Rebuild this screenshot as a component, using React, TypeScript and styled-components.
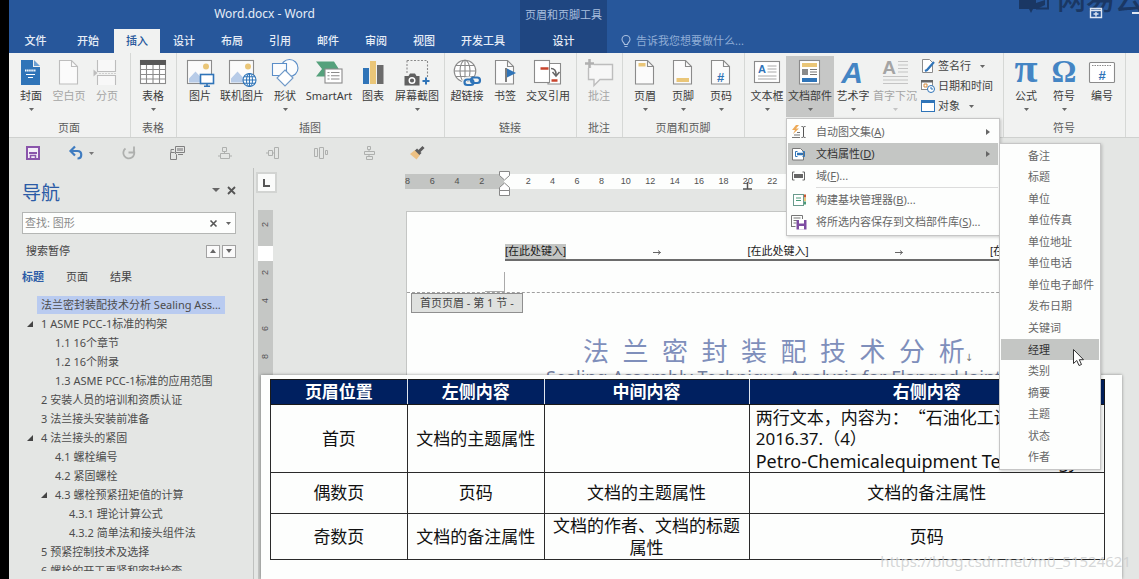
import React from 'react';
import styled, { createGlobalStyle } from 'styled-components';

const UI = '"Noto Sans", "Noto Sans CJK SC", sans-serif';
const CJK = '"Noto Sans CJK SC", sans-serif';
const BLUE = '#2f74b8';
const GRAY = '#8b8b8b';
const PALE = '#bdbdbd';
const SAND = '#eac678';

const Global = createGlobalStyle`
  *, *::before, *::after { box-sizing: border-box; }
  body { margin: 0; background: #e4e6e4; }
  button { font: inherit; color: inherit; background: none; border: 0; padding: 0; margin: 0; cursor: default; white-space: nowrap; }
  svg { display: block; flex: none; overflow: visible; }
`;

const Window = styled.div`
  position: relative;
  display: flex;
  flex-direction: column;
  height: 100vh;
  overflow: hidden;
  border-left: 9px solid #000;
  background: #e4e6e4;
  color: #444;
  font-family: ${UI};
  font-size: 11px;
  line-height: 16px;
`;

/* ---------- title bar and tabs ---------- */
const Header = styled.header`
  position: relative;
  flex: none;
  display: flex;
  height: 53px;
  background: #27579b;
  color: #e6edf7;
  overflow: hidden;
`;
const MainTabs = styled.div`
  flex: none;
  width: 511px;
`;
const DocTitle = styled.div`
  height: 29px;
  font-size: 12px;
  line-height: 28px;
  text-align: center;
`;
const TabRow = styled.nav`
  display: flex;
  height: 24px;
`;
const Tab = styled.button<{ $w: number; $on?: boolean }>`
  flex: none;
  width: ${p => p.$w}px;
  height: 24px;
  line-height: 22px;
  font-weight: 500;
  ${p => p.$on && 'background: #f1f2f1; color: #27579b;'}
`;
const Contextual = styled.div`
  flex: none;
  width: 87px;
  background: #1f4681;
  text-align: center;
`;
const ContextTitle = styled.div`
  height: 29px;
  line-height: 29px;
  color: #a9bfdf;
`;
const TellMe = styled.button`
  display: flex;
  align-items: center;
  align-self: flex-end;
  gap: 5px;
  height: 24px;
  margin-left: 14px;
  color: #8fadd6;
`;
const Brand = styled.div`
  position: absolute;
  right: -5px;
  top: -19px;
  display: flex;
  gap: 7px;
  align-items: center;
  color: #1a3764;
  font: 500 29px/32px ${CJK};
`;
const WindowButtons = styled.div`
  position: absolute;
  right: 0;
  top: 8px;
  display: flex;
  align-items: center;
  gap: 30px;
`;

/* ---------- ribbon ---------- */
const Ribbon = styled.div`
  flex: none;
  display: flex;
  height: 85px;
  background: #f1f2f1;
  border-bottom: 1px solid #cfd1cf;
`;
const Group = styled.section`
  flex: none;
  display: flex;
  flex-direction: column;
  padding: 3px 4px 0 3px;
  border-right: 1px solid #d6d8d6;
`;
const Tools = styled.div`
  display: flex;
  height: 64px;
`;
const Caption = styled.div`
  text-align: center;
  color: #5c5c5c;
  line-height: 16px;
`;
const ToolWrap = styled.div`
  position: relative;
`;
const ToolButton = styled.button<{ $w: number; $off?: boolean; $on?: boolean }>`
  display: flex;
  flex-direction: column;
  align-items: center;
  width: ${p => p.$w}px;
  height: 61px;
  padding-top: 3px;
  color: ${p => (p.$off ? '#a5a5a5' : '#3c3c3c')};
  background: ${p => (p.$on ? '#c6c7c6' : 'none')};
`;
const ToolLabel = styled.span`
  margin: 1px 0 4px;
  line-height: 16px;
`;
const SmallTools = styled.div`
  display: flex;
  flex-direction: column;
  width: 81px;
  padding-left: 3px;
`;
const SmallTool = styled.button`
  display: flex;
  align-items: center;
  gap: 3px;
  height: 20px;
  & > svg:last-child:not(:first-child) { margin-left: 6px; }
`;

/* ---------- menus ---------- */
const Menu = styled.div`
  position: absolute;
  z-index: 10;
  top: 62px;
  left: 0;
  width: 214px;
  padding: 2px 1px;
  background: #fdfefd;
  border: 1px solid #c6c6c6;
  box-shadow: 1px 1px 3px rgba(0, 0, 0, 0.2);
`;
const MenuRow = styled.div`
  position: relative;
`;
const MenuItem = styled.button<{ $on?: boolean }>`
  display: flex;
  align-items: center;
  gap: 9px;
  width: 100%;
  height: 22px;
  padding: 0 8px 0 3px;
  color: ${p => (p.$on ? '#333' : '#666')};
  background: ${p => (p.$on ? '#c4c6c4' : 'none')};
`;
const MenuText = styled.span`
  flex: 1;
  text-align: left;
`;
const MenuRule = styled.hr`
  margin: 0 0 1px 28px;
  border: 0;
  border-top: 1px solid #dcdcdc;
`;
const SubMenu = styled.div`
  position: absolute;
  top: 0;
  left: 100%;
  display: flex;
  flex-direction: column;
  width: 102px;
  height: 327px;
  margin-left: 1px;
  padding: 1px;
  background: #fdfefd;
  border: 1px solid #c6c6c6;
  box-shadow: 1px 1px 3px rgba(0, 0, 0, 0.2);
`;
const SubItem = styled.button<{ $on?: boolean }>`
  position: relative;
  flex: 1;
  padding-left: 27px;
  text-align: left;
  line-height: 16px;
  color: ${p => (p.$on ? '#333' : '#666')};
  background: ${p => (p.$on ? '#c4c6c4' : 'none')};
`;
const Pointer = styled.svg`
  position: absolute;
  right: 15px;
  top: 10px;
`;

/* ---------- quick access bar ---------- */
const QuickBar = styled.div`
  flex: none;
  display: flex;
  align-items: center;
  height: 30px;
`;
const QuickButton = styled.button`
  display: flex;
  align-items: center;
  justify-content: center;
  gap: 6px;
  width: 48px;
  height: 30px;
`;

/* ---------- navigation pane ---------- */
const Body = styled.div`
  flex: 1;
  display: flex;
  min-height: 0;
`;
const NavPane = styled.aside`
  flex: none;
  display: flex;
  flex-direction: column;
  width: 245px;
  padding: 10px 17px 8px 13px;
  border-right: 1px solid #bfc1bf;
`;
const NavHead = styled.div`
  display: flex;
  justify-content: space-between;
  height: 30px;
  margin-bottom: 4px;
`;
const NavTitle = styled.h2`
  margin: 0;
  color: #2b5ba6;
  font-size: 19px;
  font-weight: 400;
  line-height: 30px;
`;
const Pair = styled.div<{ $gap: number }>`
  display: flex;
  align-items: center;
  gap: ${p => p.$gap}px;
  height: 24px;
`;
const SearchBox = styled.div`
  display: flex;
  align-items: center;
  gap: 9px;
  height: 22px;
  padding: 0 4px 0 2px;
  background: #fdfefd;
  border: 1px solid #b4b6b4;
`;
const SearchInput = styled.input`
  flex: 1;
  min-width: 0;
  padding: 0;
  border: 0;
  outline: 0;
  background: none;
  font: 11px/16px ${UI};
  &::placeholder { color: #8a8a8a; opacity: 1; }
`;
const StatusRow = styled.div`
  display: flex;
  align-items: center;
  justify-content: space-between;
  height: 18px;
  margin-top: 8px;
  padding-left: 4px;
`;
const StepButton = styled.button`
  display: grid;
  place-items: center;
  width: 14px;
  height: 13px;
  background: #fafafa;
  border: 1px solid #a2a2a2;
`;
const NavTabs = styled.div`
  display: flex;
  gap: 22px;
  height: 18px;
  margin: 8px 0 9px;
`;
const NavTab = styled.button<{ $on?: boolean }>`
  font-weight: ${p => (p.$on ? 700 : 400)};
  color: ${p => (p.$on ? '#2b5ba6' : '#444')};
`;
const Outline = styled.ul`
  flex: 1;
  min-height: 0;
  margin: 0;
  padding: 0;
  overflow: hidden;
  list-style: none;
`;
const OutlineRow = styled.li<{ $level: number }>`
  display: flex;
  align-items: center;
  height: 19px;
  padding-left: ${p => 5 + p.$level * 14}px;
`;
const Twist = styled.span`
  width: 10px;
`;
const OutlineLink = styled.a<{ $on?: boolean }>`
  padding: 0 4px;
  line-height: 18px;
  color: #4c4c4c;
  text-decoration: none;
  white-space: nowrap;
  background: ${p => (p.$on ? '#b9cbf0' : 'none')};
`;

/* ---------- document ---------- */
const Workspace = styled.main`
  flex: 1;
  display: flex;
  min-width: 0;
`;
const SideColumn = styled.div`
  flex: none;
  display: flex;
  flex-direction: column;
  width: 24px;
  padding: 4px 1px 0 2px;
`;
const TabStop = styled.button`
  display: grid;
  place-items: center;
  height: 21px;
  background: #fafbfa;
  border: 2px solid #d2d4d2;
`;
const VRuler = styled.div`
  flex: 1;
  display: flex;
  flex-direction: column;
  width: 15px;
  margin: 17px 0 0 2px;
  background: #c5c7c5;
  color: #555;
  font: 9px/15px "Liberation Sans", sans-serif;
`;
const VGap = styled.div`
  height: 15px;
  margin: 8px 0 -3px;
  background: #fff;
`;
const VMark = styled.div<{ $h?: number }>`
  height: ${p => p.$h ?? 28}px;
  writing-mode: vertical-rl;
  transform: rotate(180deg);
  text-align: center;
`;
const Canvas = styled.div`
  flex: 1;
  display: flex;
  flex-direction: column;
  min-width: 0;
`;
const HRuler = styled.div`
  position: relative;
  flex: none;
  display: flex;
  height: 15px;
  margin: 6px 86px 0 127px;
  color: #505050;
  font: 9px/15px "Liberation Sans", sans-serif;
`;
const RulerMargin = styled.div`
  flex: none;
  display: flex;
  width: 99px;
  background: #c3c5c3;
`;
const RulerText = styled.div`
  flex: 1;
  display: flex;
  padding-left: 12px;
  background: #fdfefd;
`;
const Mark = styled.span<{ $center?: boolean }>`
  flex: 1 1 0;
  width: 0;
  text-align: ${p => (p.$center ? 'center' : 'left')};
`;
const Indent = styled.svg`
  position: absolute;
  left: 94px;
  top: -3px;
`;
const TabMark = styled.svg`
  position: absolute;
  left: 338px;
  top: 8px;
`;
const Page = styled.article`
  flex: 1;
  min-height: 0;
  margin: 22px 39px 0 128px;
  padding-top: 32px;
  background: #fdfefd;
  border: 1px solid #c4c6c4;
`;
const PageHeader = styled.div`
  display: flex;
  justify-content: space-between;
  margin: 0 48px 0 98px;
  border-bottom: 2px solid #6c6c6c;
  color: #1c1c1c;
  line-height: 15px;
`;
const Field = styled.span<{ $on?: boolean }>`
  font-family: "Liberation Sans", "Noto Sans CJK SC", sans-serif;
  background: ${p => (p.$on ? '#c3c5c3' : 'none')};
`;
const CropMark = styled.div`
  width: 20px;
  height: 20px;
  margin: 11px 0 0 78px;
  border-right: 1px solid #aaa;
  border-bottom: 1px solid #aaa;
`;
const HeaderEdge = styled.div`
  border-top: 1px dashed #a0a0a0;
`;
const SectionTag = styled.div`
  width: fit-content;
  height: 20px;
  margin-left: 4px;
  padding: 0 8px;
  line-height: 18px;
  background: #dfe1df;
  border: 1px solid #8f8f8f;
`;
const DocHeading = styled.h1`
  margin: 22px 48px 0 98px;
  color: #7f8fbb;
  font: 400 26px/32px ${UI};
  text-align: center;
  white-space: pre;
`;
const LineMark = styled.span`
  color: #777;
  font: 10px/16px "DejaVu Sans", sans-serif;
`;
const DocSub = styled.p`
  margin: 0 48px 0 98px;
  color: #7480a0;
  font: 400 18px/20px ${UI};
  text-align: center;
  white-space: nowrap;
`;

/* ---------- slide over the document ---------- */
const Slide = styled.section`
  position: absolute;
  z-index: 2;
  left: 252px;
  right: 17px;
  bottom: 0;
  height: 204px;
  padding: 4px 17px 0 9px;
  background: #fdfefd;
  box-shadow: 0 0 3px rgba(0, 0, 0, 0.4);
`;
const Table = styled.table`
  width: 100%;
  table-layout: fixed;
  border-collapse: collapse;
  color: #111;
  font: 17px/22px ${UI};
`;
const Th = styled.th`
  height: 25px;
  padding: 0;
  background: #002060;
  color: #fff;
  font-weight: 700;
  border: 1px solid #1a1a1a;
  &:not(:last-child) { border-right-color: #dfe4ee; }
  & + & { border-left-color: #dfe4ee; }
`;
const Td = styled.td<{ $h: number; $left?: boolean }>`
  height: ${p => p.$h}px;
  padding: 0 6px;
  border: 1px solid #2a2a2a;
  text-align: ${p => (p.$left ? 'left' : 'center')};
  white-space: ${p => (p.$left ? 'nowrap' : 'normal')};
`;
const CjkLine = styled.div`
  font-family: ${CJK};
  text-spacing-trim: space-all;
`;
const LatinLine = styled.div`
  font-size: 18px;
`;
const Watermark = styled.div`
  position: absolute;
  z-index: 3;
  right: 8px;
  bottom: 7px;
  color: rgba(205, 207, 208, 0.85);
  font: 15px/22px ${UI};
`;

/* ---------- drawings ---------- */
const Caret = ({ c = '#666', w = 5 }: { c?: string; w?: number }) => {
  const h = Math.ceil(w / 2);
  return <svg width={w} height={h} viewBox={`0 0 ${w} ${h}`}><path d={`M0 0h${w}L${w / 2} ${h}z`} fill={c} /></svg>;
};
const Ic = ({ children }: { children: React.ReactNode }) => (
  <svg width="28" height="28" viewBox="0 0 28 28" fill="none" stroke={GRAY} strokeWidth="1.1">{children}</svg>
);
const Sheet = ({ c = GRAY }: { c?: string }) => (
  <><path d="M4.5 1.5h12l6 6v17.500h-18z" fill="#fbfbfb" stroke={c} /><path d="M16.500 1.500v6h6" stroke={c} /></>
);
const Photo = () => (
  <>
    <rect x="1.500" y="1.500" width="24" height="23" fill="#fbfbfb" />
    <path d="M3 23.500v-4l6.500-7 6 6.500 2.500-2v6.500z" fill="#b8cce8" stroke="none" />
    <circle cx="20" cy="7.500" r="3" fill={SAND} stroke="none" />
  </>
);

const icons: Record<string, React.ReactNode> = {
  cover: (
    <Ic>
      <path d="M4 1h12v7h7v18H4z" fill={BLUE} stroke="none" />
      <path d="M17 1l6 6h-6z" fill="#6ea0d2" stroke="none" />
      <path d="M8 11.500h11" stroke="#fff" strokeWidth="2" strokeDasharray="1.500 .6" />
      <path d="M9 15.500h9M11 18.500h5" stroke="#fff" />
    </Ic>
  ),
  blank: <Ic><Sheet c={PALE} /></Ic>,
  break: (
    <Ic>
      <path d="M4.500 1v11.500h18V1M4.500 26V16.500h18V26" fill="#f8f8f8" stroke={PALE} />
      <path d="M6 14.500h17" stroke="#d0d0d0" strokeDasharray="2 1" />
      <path d="M.5 10.500v7l4-3.500z" fill={PALE} stroke="none" />
    </Ic>
  ),
  table: (
    <Ic>
      <rect x="1.500" y="1.500" width="25" height="23" fill="#fff" />
      <path d="M1 1h26v5H1z" fill="#585858" stroke="none" />
      <path d="M1.500 10.500h25M1.500 15.500h25M1.500 20h25M7.500 6v18.500M14 6v18.500M20.500 6v18.500" />
    </Ic>
  ),
  picture: (
    <Ic><Photo /><rect x="14.500" y="15.500" width="13" height="9" fill="#fff" stroke={BLUE} strokeWidth="1.600" /><path d="M21 25v2.500M18 27.300h6" stroke={BLUE} strokeWidth="1.600" /></Ic>
  ),
  online: (
    <Ic><Photo /><g stroke={BLUE}><circle cx="21.500" cy="21" r="6.500" fill="#fff" /><ellipse cx="21.500" cy="21" rx="3" ry="6.500" /><path d="M15 21h13M21.500 14.500v13M16 17.800h11M16 24.200h11" /></g></Ic>
  ),
  shapes: (
    <Ic>
      <g stroke="#5b8ec8" fill="#fbfcfd"><circle cx="18.500" cy="9" r="8.500" /><path d="M1.500 4.500h14v12h-14z" /></g>
      <path d="M14 11l8 8-8 8-8-8z" fill="#fff" stroke="#6f99c8" />
    </Ic>
  ),
  smartart: (
    <Ic>
      <path d="M1 2.500h18l4.500 7-4.500 8H1l6-7.500z" fill="#55a17c" stroke="none" />
      <rect x="10" y="10" width="17" height="14" fill="#fff" />
      <path d="M12.500 13.500h2M12.500 16.700h2M12.500 20h2M16 13.500h8.500M16 16.700h8.500M16 20h8.500" />
    </Ic>
  ),
  chart: (
    <Ic><g stroke="none"><path d="M4 9h6v16H4z" fill={BLUE} /><path d="M11 2h6v23h-6z" fill={SAND} /><path d="M18 6h6.500v19H18z" fill="#6b6b6b" /></g></Ic>
  ),
  shot: (
    <Ic>
      <path d="M4 1.500h20.500v17M4 1.500V15" strokeDasharray="2 1.500" />
      <path d="M1.500 17h4l1.500-2.500h5l1.500 2.500h3v9.500h-15z" fill="#616161" stroke="none" />
      <circle cx="9" cy="21.500" r="2.800" stroke="#fff" strokeWidth="1.400" />
      <path d="M23 18.500v7M19.500 22h7" stroke={BLUE} strokeWidth="2" />
    </Ic>
  ),
  link: (
    <Ic>
      <circle cx="12" cy="12" r="10.800" fill="#fff" /><ellipse cx="12" cy="12" rx="5" ry="10.800" />
      <path d="M1.200 12h21.600M12 1.200v21.600M3 6.500h18M3 17.500h18" />
      <g stroke="#f1f2f1" strokeWidth="5"><rect x="11.500" y="20" width="8.500" height="5.500" rx="2.750" /></g>
      <g stroke={BLUE} strokeWidth="2.200"><rect x="11.500" y="20.500" width="9" height="5.500" rx="2.750" /><rect x="18" y="18.500" width="9" height="5.500" rx="2.750" /></g>
    </Ic>
  ),
  bookmark: (
    <Ic><Sheet /><path d="M15 9v14" stroke="#555" strokeWidth="1.500" /><path d="M16 9.500l9 4.500-9 4.500z" fill={BLUE} stroke="none" /></Ic>
  ),
  cross: (
    <Ic>
      <path d="M14 4.500h12.500V25H14z" fill="#fff" /><rect x=".5" y="1.500" width="15" height="22" fill="#fff" />
      <path d="M6.500 9.500h8M17.500 21.500h6" stroke="#c8452e" strokeWidth="2.500" />
      <path d="M17 9.500c4 0 5 2 5 6M18.500 13l3.500 4 3.500-4" stroke="#666" strokeWidth="1.500" />
    </Ic>
  ),
  comment: (
    <Ic><path d="M3.500 5.500h24v15H15l-6 6v-6H3.500z" fill="#f7f7f7" stroke={PALE} strokeWidth="1.400" /><path d="M4.500 0v9M0 4.500h9" stroke="#f1f2f1" strokeWidth="5" /><path d="M4.500 0v9M0 4.500h9" stroke="#b0b0b0" strokeWidth="2.500" /></Ic>
  ),
  headerIcon: <Ic><Sheet /><path d="M7.500 4h7v3.500h-7z" fill={SAND} stroke="none" /></Ic>,
  footerIcon: <Ic><Sheet /><path d="M7.500 19h12.500v4H7.500z" fill={SAND} stroke="none" /></Ic>,
  number: <Ic><Sheet /><text x="13.500" y="22.500" textAnchor="middle" fontFamily="Liberation Sans" fontWeight="700" fontSize="13" fill={BLUE} stroke="none">#</text></Ic>,
  textbox: (
    <Ic>
      <rect x="1.500" y="2.500" width="25" height="21" fill="#fff" />
      <text x="9" y="14" textAnchor="middle" fontFamily="Liberation Sans" fontWeight="700" fontSize="11" fill={BLUE} stroke="none">A</text>
      <path d="M14.500 7h9M14.500 10h9M14.500 13h9M5 17h18.500M5 20h18.500" stroke="#aaa" />
    </Ic>
  ),
  parts: (
    <Ic>
      <rect x="3.500" y="1.500" width="20" height="23.500" fill="#fff" />
      <g stroke="none"><path d="M6 4h15v4H6z" fill={SAND} /><path d="M6 10h6v6H6z" fill={GRAY} /><path d="M6 19h15v4H6z" fill={BLUE} /></g>
      <path d="M14 10.500h7M14 13h7M14 15.500h7" stroke="#777" />
    </Ic>
  ),
  wordart: <Ic><text x="13" y="24" textAnchor="middle" fontFamily="Liberation Sans" fontStyle="italic" fontWeight="700" fontSize="30" fill="#4485c4" stroke="none">A</text></Ic>,
  dropcap: (
    <Ic><text x="8" y="15" textAnchor="middle" fontFamily="Liberation Sans" fontWeight="700" fontSize="19" fill="#a4a4a4" stroke="none">A</text><path d="M17 2.500h10M17 6h10M17 9.500h10M17 13h10M2 17.500h25M2 21h25M2 24.500h25" stroke="#c4c4c4" /></Ic>
  ),
  pi: <Ic><text x="14" y="23" textAnchor="middle" fontFamily="Liberation Serif" fontWeight="700" fontSize="42" fill="#4485c4" stroke="none">π</text></Ic>,
  omega: <Ic><text x="14" y="23" textAnchor="middle" fontFamily="Liberation Serif" fontWeight="700" fontSize="31" fill="#4485c4" stroke="none">Ω</text></Ic>,
  listnum: (
    <Ic><rect x="1.500" y="3.500" width="25" height="20" rx="1" fill="#fff" /><path d="M4 6.500h20" strokeDasharray="1.500 1" /><text x="14" y="21" textAnchor="middle" fontFamily="Liberation Sans" fontWeight="700" fontSize="13" fill={BLUE} stroke="none">#</text></Ic>
  ),
};

interface ToolDef { label: string; icon: string; w: number; caret?: boolean; off?: boolean; on?: boolean; menu?: React.ReactNode }

const Tool = ({ label, icon, w, caret, off, on, menu }: ToolDef) => (
  <ToolWrap>
    <ToolButton $w={w} $off={off} $on={on} disabled={off}>
      {icons[icon]}
      <ToolLabel>{label}</ToolLabel>
      {caret && <Caret c={off ? '#c4c4c4' : '#666'} />}
    </ToolButton>
    {menu}
  </ToolWrap>
);

const properties = ['备注', '标题', '单位', '单位传真', '单位地址', '单位电话', '单位电子邮件', '发布日期', '关键词', '经理', '类别', '摘要', '主题', '状态', '作者'];

const MI = ({ children }: { children: React.ReactNode }) => (
  <svg width="16" height="14" viewBox="0 0 16 14" fill="none" stroke="#777">{children}</svg>
);
const Arrow = () => <svg width="4" height="6" viewBox="0 0 4 6"><path d="M0 0l4 3-4 3z" fill="#666" /></svg>;

const PartsMenu = () => (
  <Menu>
    <MenuItem>
      <MI><path d="M5 0L1 5h3L2 9l6-5.500H5L8 0z" fill="#eeaa58" stroke="none" /><path d="M1 12.500h8M3 10h6M6 7.500h3" /><path d="M10.500 1.500c2 0 2 .5 2 1.500v8c0 1 0 1.500-2 1.500M14.500 1.500c-2 0-2 .5-2 1.500v8c0 1 0 1.500 2 1.500" stroke="#555" /></MI>
      <MenuText>自动图文集(<u>A</u>)</MenuText><Arrow />
    </MenuItem>
    <MenuRow>
      <MenuItem $on>
        <MI><path d="M1.500 1.500h8l3 3V13h-11z" fill="#fff" /><path d="M6.500 4.500h-2v5h2M11.500 4.500h2v5h-2" stroke={BLUE} /><path d="M6 7h6" stroke={BLUE} strokeWidth="2.500" /></MI>
        <MenuText>文档属性(<u>D</u>)</MenuText><Arrow />
      </MenuItem>
      <SubMenu>
        {properties.map(p => (
          <SubItem key={p} $on={p === '经理'}>
            {p}
            {p === '经理' && (
              <Pointer width="11" height="18" viewBox="0 0 11 18"><path d="M.5.5v14l3.300-3 2.200 5 2.500-1-2.200-4.800h4.200z" fill="#fff" stroke="#333" /></Pointer>
            )}
          </SubItem>
        ))}
      </SubMenu>
    </MenuRow>
    <MenuItem>
      <MI><path d="M3.500 3h-2v8h2M11.500 3h2v8h-2" stroke="#666" /><path d="M3 5h9v4H3z" fill="#666" stroke="none" /></MI>
      <MenuText>域(<u>F</u>)...</MenuText>
    </MenuItem>
    <MenuRule />
    <MenuItem>
      <MI><rect x="2.500" y="1.500" width="10" height="11" fill="#fff" stroke="#6a9a8c" /><path d="M5 5h5M5 7.500h5" stroke="#4b9b78" /><path d="M14 1.500v3" stroke="#ca5a32" strokeWidth="2" /><path d="M14 5v3" stroke={SAND} strokeWidth="2" /><path d="M14 8.500v3" stroke="#4b9b78" strokeWidth="2" /></MI>
      <MenuText>构建基块管理器(<u>B</u>)...</MenuText>
    </MenuItem>
    <MenuItem>
      <MI><path d="M.5 12V.5h11V4M2.500 3h7M2.500 5.500h4M2.500 8h3M.5 11.500h4" /><path d="M5.500 5h10v9.500h-10z" fill="#7d4ba2" stroke="none" /><path d="M8 5h5v3.500H8zM8 11h5v3.500H8z" fill="#fff" stroke="none" /></MI>
      <MenuText>将所选内容保存到文档部件库(<u>S</u>)...</MenuText>
    </MenuItem>
  </Menu>
);

const outline: { t: string; level: number; open?: boolean; on?: boolean }[] = [
  { t: '法兰密封装配技术分析 Sealing Ass...', level: 0, on: true },
  { t: '1 ASME PCC-1标准的构架', level: 0, open: true },
  { t: '1.1 16个章节', level: 1 },
  { t: '1.2 16个附录', level: 1 },
  { t: '1.3 ASME PCC-1标准的应用范围', level: 1 },
  { t: '2 安装人员的培训和资质认证', level: 0 },
  { t: '3 法兰接头安装前准备', level: 0 },
  { t: '4 法兰接头的紧固', level: 0, open: true },
  { t: '4.1 螺栓编号', level: 1 },
  { t: '4.2 紧固螺栓', level: 1 },
  { t: '4.3 螺栓预紧扭矩值的计算', level: 1, open: true },
  { t: '4.3.1 理论计算公式', level: 2 },
  { t: '4.3.2 简单法和接头组件法', level: 2 },
  { t: '5 预紧控制技术及选择', level: 0 },
  { t: '6 螺栓的开工再紧和密封检查', level: 0 },
];

const Q = ({ children, w = 14, c = '#aeb0ae' }: { children: React.ReactNode; w?: number; c?: string }) => (
  <svg width={w} height="14" viewBox={`0 0 ${w} 14`} fill="none" stroke={c}>{children}</svg>
);
const TabArrow = () => (
  <svg width="10" height="15" viewBox="0 0 10 15" fill="none" stroke="#666"><path d="M1 8.500h7.500M6 6.500l2.500 2-2.500 2" /></svg>
);

export default function App() {
  return (
    <Window>
      <Global />
      <Header>
        <MainTabs>
          <DocTitle>Word.docx - Word</DocTitle>
          <TabRow>
            <Tab $w={53}>文件</Tab>
            <Tab $w={52}>开始</Tab>
            <Tab $w={46} $on>插入</Tab>
            <Tab $w={48}>设计</Tab>
            <Tab $w={48}>布局</Tab>
            <Tab $w={48}>引用</Tab>
            <Tab $w={48}>邮件</Tab>
            <Tab $w={48}>审阅</Tab>
            <Tab $w={48}>视图</Tab>
            <Tab $w={70}>开发工具</Tab>
          </TabRow>
        </MainTabs>
        <Contextual>
          <ContextTitle>页眉和页脚工具</ContextTitle>
          <Tab $w={86}>设计</Tab>
        </Contextual>
        <TellMe>
          <svg width="10" height="13" viewBox="0 0 10 13" fill="none" stroke="#a9bfdf" strokeWidth="1.100"><path d="M3.500 9.500c0-2-2.500-2.500-2.500-5a4 4 0 018 0c0 2.500-2.500 3-2.500 5zM3.500 11.500h3" /></svg>
          告诉我您想要做什么...
        </TellMe>
        <Brand>
          <svg width="32" height="32" viewBox="0 0 32 32"><path d="M1 4h17v18l9-3v5l-8 4h-4l-2 4-2-4H1z" fill="#1a3764" /><path d="M18 5h12v22.500H18" fill="none" stroke="#1a3764" strokeWidth="2" /></svg>
          网易云
        </Brand>
        <WindowButtons>
          <svg width="12" height="10" viewBox="0 0 12 10" fill="none" stroke="#dfe7f3" strokeWidth="1.400"><path d="M.5.5h11v9H.500zM.5 2.500h11M6 8.500V4M3.500 6h5" /></svg>
          <svg width="7" height="2" viewBox="0 0 7 2"><path d="M0 0h7v2H0z" fill="#dfe7f3" /></svg>
        </WindowButtons>
      </Header>

      <Ribbon>
        <Group>
          <Tools>
            <Tool label="封面" icon="cover" w={38} caret />
            <Tool label="空白页" icon="blank" w={38} off />
            <Tool label="分页" icon="break" w={38} off />
          </Tools>
          <Caption>页面</Caption>
        </Group>
        <Group>
          <Tools><Tool label="表格" icon="table" w={38} caret /></Tools>
          <Caption>表格</Caption>
        </Group>
        <Group>
          <Tools>
            <Tool label="图片" icon="picture" w={40} />
            <Tool label="联机图片" icon="online" w={44} />
            <Tool label="形状" icon="shapes" w={42} caret />
            <Tool label="SmartArt" icon="smartart" w={46} />
            <Tool label="图表" icon="chart" w={42} />
            <Tool label="屏幕截图" icon="shot" w={46} caret />
          </Tools>
          <Caption>插图</Caption>
        </Group>
        <Group>
          <Tools>
            <Tool label="超链接" icon="link" w={38} />
            <Tool label="书签" icon="bookmark" w={38} />
            <Tool label="交叉引用" icon="cross" w={48} />
          </Tools>
          <Caption>链接</Caption>
        </Group>
        <Group>
          <Tools><Tool label="批注" icon="comment" w={38} off /></Tools>
          <Caption>批注</Caption>
        </Group>
        <Group>
          <Tools>
            <Tool label="页眉" icon="headerIcon" w={38} caret />
            <Tool label="页脚" icon="footerIcon" w={38} caret />
            <Tool label="页码" icon="number" w={38} caret />
          </Tools>
          <Caption>页眉和页脚</Caption>
        </Group>
        <Group>
          <Tools>
            <Tool label="文本框" icon="textbox" w={38} caret />
            <Tool label="文档部件" icon="parts" w={48} caret on menu={<PartsMenu />} />
            <Tool label="艺术字" icon="wordart" w={38} caret />
            <Tool label="首字下沉" icon="dropcap" w={46} caret off />
            <SmallTools>
              <SmallTool>
                <Q w={14} c={GRAY}><path d="M1.500.5h7l3 3v10h-10z" fill="#fff" /><path d="M13 3L6 11l-2 1" stroke={BLUE} strokeWidth="2.200" /></Q>
                签名行<Caret />
              </SmallTool>
              <SmallTool>
                <Q w={14} c={GRAY}><rect x=".5" y="1.500" width="11" height="9" fill="#fff" /><path d="M0 1h12v2.500H0z" fill="#666" stroke="none" /><path d="M3 5h3v3H3z" stroke="#d58a3c" /><circle cx="10" cy="10" r="3.500" fill="#fff" stroke={BLUE} /><path d="M10 8v2h2" stroke={BLUE} /></Q>
                日期和时间
              </SmallTool>
              <SmallTool>
                <Q w={14} c={BLUE}><rect x=".5" y="1.500" width="13" height="11" fill="#fff" /><path d="M0 1h14v3H0z" fill={BLUE} stroke="none" /></Q>
                对象<Caret />
              </SmallTool>
            </SmallTools>
          </Tools>
        </Group>
        <Group>
          <Tools>
            <Tool label="公式" icon="pi" w={38} caret />
            <Tool label="符号" icon="omega" w={38} caret />
            <Tool label="编号" icon="listnum" w={38} />
          </Tools>
          <Caption>符号</Caption>
        </Group>
      </Ribbon>

      <QuickBar>
        <QuickButton aria-label="保存"><Q c="#8a55ab"><path d="M1 1h12v12H1z" fill="#f4eef8" strokeWidth="2" /><path d="M3 7h8" strokeWidth="2" /><path d="M4.500 13V9.500h5V13" strokeWidth="1.500" /></Q></QuickButton>
        <QuickButton aria-label="撤消"><Q c="#3f7cc0"><path d="M6 .5L1.500 5 6 9.500M2 5h6.500c5 0 5 7.500 0 7.500" strokeWidth="2.200" /></Q><Caret c="#777" /></QuickButton>
        <QuickButton aria-label="恢复"><Q><path d="M3.500 2.500a5.500 5.500 0 108 1.500M6.500 6.500h5.500V.5" strokeWidth="1.800" /></Q></QuickButton>
        <QuickButton aria-label="切换窗口"><Q w={16} c="#808080"><path d="M6.500.5h9v6h-9zM9 8.500h5M5 3.500H2V6M1.500 6.500h4l2 2v5h-6z" /><path d="M8 2h6v3H8z" fill="#aaa" stroke="none" /></Q></QuickButton>
        <QuickButton aria-label="居中对齐"><Q><path d="M4.500 1.500h4v4h-4zM6.500 5.500v2M2.500 7.500h9v5h-9zM0 10h2M12 10h2" /></Q></QuickButton>
        <QuickButton aria-label="垂直对齐"><Q><path d="M2.500 4.500h4v5h-4zM8.500 1.500h4v11h-4zM0 7h2M6.500 7h2" /></Q></QuickButton>
        <QuickButton aria-label="横向分布"><Q><path d="M.5 2.500h3v8h-3zM5.500 1.500h4v11h-4zM11.500 4.500h2v4h-2z" /></Q></QuickButton>
        <QuickButton aria-label="纵向分布"><Q><path d="M5.500.5h3v3h-3zM2.500 5.500h10v3h-10zM4.500 10.500h6v3h-6zM7 3.500v2M7 8.500v2" /></Q></QuickButton>
        <QuickButton aria-label="格式刷"><Q><path d="M5 4l5 5-3.500 4.500L0 8z" fill="#ecc184" stroke="none" /><path d="M6 3.500l4.500 4.500M9 5.500l4.500-4.500" stroke="#5c5c5c" strokeWidth="3" /></Q></QuickButton>
      </QuickBar>

      <Body>
        <NavPane>
          <NavHead>
            <NavTitle>导航</NavTitle>
            <Pair $gap={7}>
              <Caret w={8} />
              <button aria-label="关闭"><svg width="9" height="9" viewBox="0 0 9 9"><path d="M1 1l7 7M8 1L1 8" stroke="#555" strokeWidth="1.800" /></svg></button>
            </Pair>
          </NavHead>
          <SearchBox>
            <SearchInput aria-label="查找" placeholder="查找: 图形" />
            <svg width="7" height="7" viewBox="0 0 7 7"><path d="M.5.5l6 6M6.500.5l-6 6" stroke="#555" strokeWidth="1.600" /></svg>
            <Caret />
          </SearchBox>
          <StatusRow>
            搜索暂停
            <Pair $gap={2}>
              <StepButton aria-label="上一个"><svg width="6" height="4" viewBox="0 0 6 4"><path d="M0 4h6L3 0z" fill="#666" /></svg></StepButton>
              <StepButton aria-label="下一个"><svg width="6" height="4" viewBox="0 0 6 4"><path d="M0 0h6L3 4z" fill="#666" /></svg></StepButton>
            </Pair>
          </StatusRow>
          <NavTabs>
            <NavTab $on>标题</NavTab>
            <NavTab>页面</NavTab>
            <NavTab>结果</NavTab>
          </NavTabs>
          <Outline>
            {outline.map(o => (
              <OutlineRow key={o.t} $level={o.level}>
                <Twist>{o.open && <svg width="6" height="6" viewBox="0 0 6 6"><path d="M6 0v6H0z" fill="#444" /></svg>}</Twist>
                <OutlineLink href="#" $on={o.on}>{o.t}</OutlineLink>
              </OutlineRow>
            ))}
          </Outline>
        </NavPane>

        <Workspace>
          <SideColumn>
            <TabStop aria-label="制表符"><svg width="8" height="8" viewBox="0 0 8 8"><path d="M1 0v7h6" fill="none" stroke="#555" strokeWidth="2" /></svg></TabStop>
            <VRuler>
              <VMark>2</VMark>
              <VGap />
              <VMark>2</VMark>
              <VMark>4</VMark>
              <VMark>6</VMark>
              <VMark>8</VMark>
            </VRuler>
          </SideColumn>
          <Canvas>
            <HRuler>
              <RulerMargin>{[8, 6, 4, 2].map(n => <Mark key={n}>{n}</Mark>)}</RulerMargin>
              <RulerText>{Array.from({ length: 22 }, (_, i) => <Mark key={i} $center>{i * 2 + 2}</Mark>)}</RulerText>
              <Indent width="11" height="27" viewBox="0 0 11 27" fill="#fff" stroke="#888"><path d="M.5.5h10v4l-5 4.500-5-4.500zM5.500 12l5 4.500v3H.5v-3zM.5 19.500h10v5H.5z" /></Indent>
              <TabMark width="9" height="8" viewBox="0 0 9 8"><path d="M4.500 0v7M0 7h9" stroke="#555" strokeWidth="1.500" /></TabMark>
            </HRuler>
            <Page>
              <PageHeader>
                <Field $on>[在此处键入]</Field>
                <TabArrow />
                <Field>[在此处键入]</Field>
                <TabArrow />
                <Field>[在此处键入]</Field>
              </PageHeader>
              <CropMark />
              <HeaderEdge />
              <SectionTag>首页页眉 - 第 1 节 -</SectionTag>
              <DocHeading>{'法兰密封装配技术分析'.split('').join('  ')}<LineMark>↓</LineMark></DocHeading>
              <DocSub>Sealing Assembly Technique Analysis for Flanged Joints</DocSub>
            </Page>
          </Canvas>
        </Workspace>
      </Body>

      <Slide>
        <Table>
          <colgroup>
            <col width="16.400%" /><col width="16.400%" /><col width="24.600%" /><col width="42.600%" />
          </colgroup>
          <thead>
            <tr><Th>页眉位置</Th><Th>左侧内容</Th><Th>中间内容</Th><Th>右侧内容</Th></tr>
          </thead>
          <tbody>
            <tr>
              <Td $h={68}>首页</Td>
              <Td $h={68}>文档的主题属性</Td>
              <Td $h={68} />
              <Td $h={68} $left>
                <CjkLine lang="zh-CN">两行文本，内容为：“石油化工设备</CjkLine>
                <div>2016.37.（4）</div>
                <LatinLine>Petro-Chemicalequipment Technology</LatinLine>
              </Td>
            </tr>
            <tr><Td $h={41}>偶数页</Td><Td $h={41}>页码</Td><Td $h={41}>文档的主题属性</Td><Td $h={41}>文档的备注属性</Td></tr>
            <tr><Td $h={46}>奇数页</Td><Td $h={46}>文档的备注属性</Td><Td $h={46}>文档的作者、文档的标题属性</Td><Td $h={46}>页码</Td></tr>
          </tbody>
        </Table>
      </Slide>
      <Watermark>https://blog.csdn.net/m0_51524621</Watermark>
    </Window>
  );
}
